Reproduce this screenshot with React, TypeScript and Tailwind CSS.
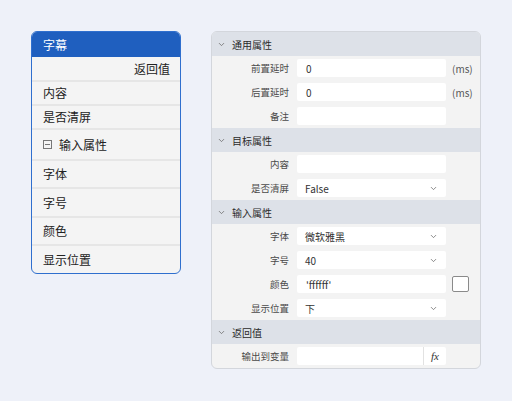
import { ChevronDown } from "lucide-react";

const font = { fontFamily: '"Noto Sans CJK SC", "Noto Sans", sans-serif' };

const NodeCard: React.FC = () => {
  const rows = ["内容", "是否清屏"];
  const inputRows = [
    { t: "字体", h: "h-[28px]" },
    { t: "字号", h: "h-[29px]" },
    { t: "颜色", h: "h-[28px]" },
    { t: "显示位置", h: "h-[27px]" },
  ];
  return (
    <div className="w-[150px] rounded-[6px] border border-[#2f6fce] bg-[#f4f4f4] overflow-hidden text-[12px] text-[#222]">
      <div className="h-[25px] bg-[#1f5fbf] text-white pl-[11px] flex items-center">字幕</div>
      <div className="h-[25px] flex items-center justify-end pr-[10px] border-b-2 border-[#e6e6e6]">返回值</div>
      {rows.map((r) => (
        <div key={r} className="h-[24px] flex items-center pl-[11px] border-b-2 border-[#e6e6e6]">
          {r}
        </div>
      ))}
      <div className="h-[31px] flex items-center pl-[11px] border-b-2 border-[#e6e6e6]">
        <span className="w-[9px] h-[9px] border border-[#777] flex items-center justify-center mr-[7px]">
          <span className="w-[5px] h-px bg-[#777]" />
        </span>
        输入属性
      </div>
      {inputRows.map((r, i) => (
        <div
          key={r.t}
          className={
            i < inputRows.length - 1
              ? r.h + " flex items-center pl-[11px] border-b-2 border-[#e6e6e6]"
              : r.h + " flex items-center pl-[11px]"
          }
        >
          {r.t}
        </div>
      ))}
    </div>
  );
};

const SectionHeader: React.FC<{ title: string }> = ({ title }) => (
  <div className="h-[24px] bg-[#dde1e8] flex items-center pl-[5px] text-[10px] text-[#2a2a2a]">
    <ChevronDown size={9} strokeWidth={2} className="text-[#666] mr-[6px]" />
    {title}
  </div>
);

const Row: React.FC<{ label: string; children?: React.ReactNode; extra?: React.ReactNode }> = ({
  label,
  children,
  extra,
}) => (
  <div className="h-[24px] flex items-center">
    <div className="w-[77px] text-right text-[9.5px] text-[#4a4a4a]">{label}</div>
    <div className="ml-[8px] w-[149px] h-[18px] bg-white rounded-[2px] flex items-center text-[10px] text-[#333]">
      {children}
    </div>
    {extra}
  </div>
);

const TextValue: React.FC<{ v?: string }> = ({ v }) => <span className="pl-[9px]">{v}</span>;

const SelectValue: React.FC<{ v: string }> = ({ v }) => (
  <div className="flex items-center justify-between w-full pl-[8px] pr-[8px]">
    <span>{v}</span>
    <ChevronDown size={9} strokeWidth={2} className="text-[#666]" />
  </div>
);

const Ms = () => <span className="ml-[6px] text-[10px] text-[#555]">(ms)</span>;

const PropertyPanel: React.FC = () => {
  return (
    <div className="w-[270px] h-[338px] rounded-[6px] border border-[#d3d6dc] bg-[#f3f3f3] overflow-hidden">
      <SectionHeader title="通用属性" />
      <Row label="前置延时" extra={<Ms />}>
        <TextValue v="0" />
      </Row>
      <Row label="后置延时" extra={<Ms />}>
        <TextValue v="0" />
      </Row>
      <Row label="备注" />
      <SectionHeader title="目标属性" />
      <Row label="内容" />
      <Row label="是否清屏">
        <SelectValue v="False" />
      </Row>
      <SectionHeader title="输入属性" />
      <Row label="字体">
        <SelectValue v="微软雅黑" />
      </Row>
      <Row label="字号">
        <SelectValue v="40" />
      </Row>
      <Row
        label="颜色"
        extra={<span className="ml-[6px] w-[17px] h-[16px] border border-[#8a8a8a] rounded-[2px] bg-white" />}
      >
        <TextValue v="'ffffff'" />
      </Row>
      <Row label="显示位置">
        <SelectValue v="下" />
      </Row>
      <SectionHeader title="返回值" />
      <Row label="输出到变量">
        <div className="flex items-center w-full h-full">
          <div className="flex-1 h-full border-r border-[#e2e2e2]" />
          <span className="w-[22px] text-center italic text-[11px] text-[#333]" style={{ fontFamily: '"Liberation Serif", serif' }}>
            fx
          </span>
        </div>
      </Row>
    </div>
  );
};

export default function App() {
  return (
    <div className="w-[512px] h-[401px] bg-[#eef1f9] flex items-start pl-[31px] pt-[31px]" style={font}>
      <NodeCard />
      <div className="ml-[30px]">
        <PropertyPanel />
      </div>
    </div>
  );
}
